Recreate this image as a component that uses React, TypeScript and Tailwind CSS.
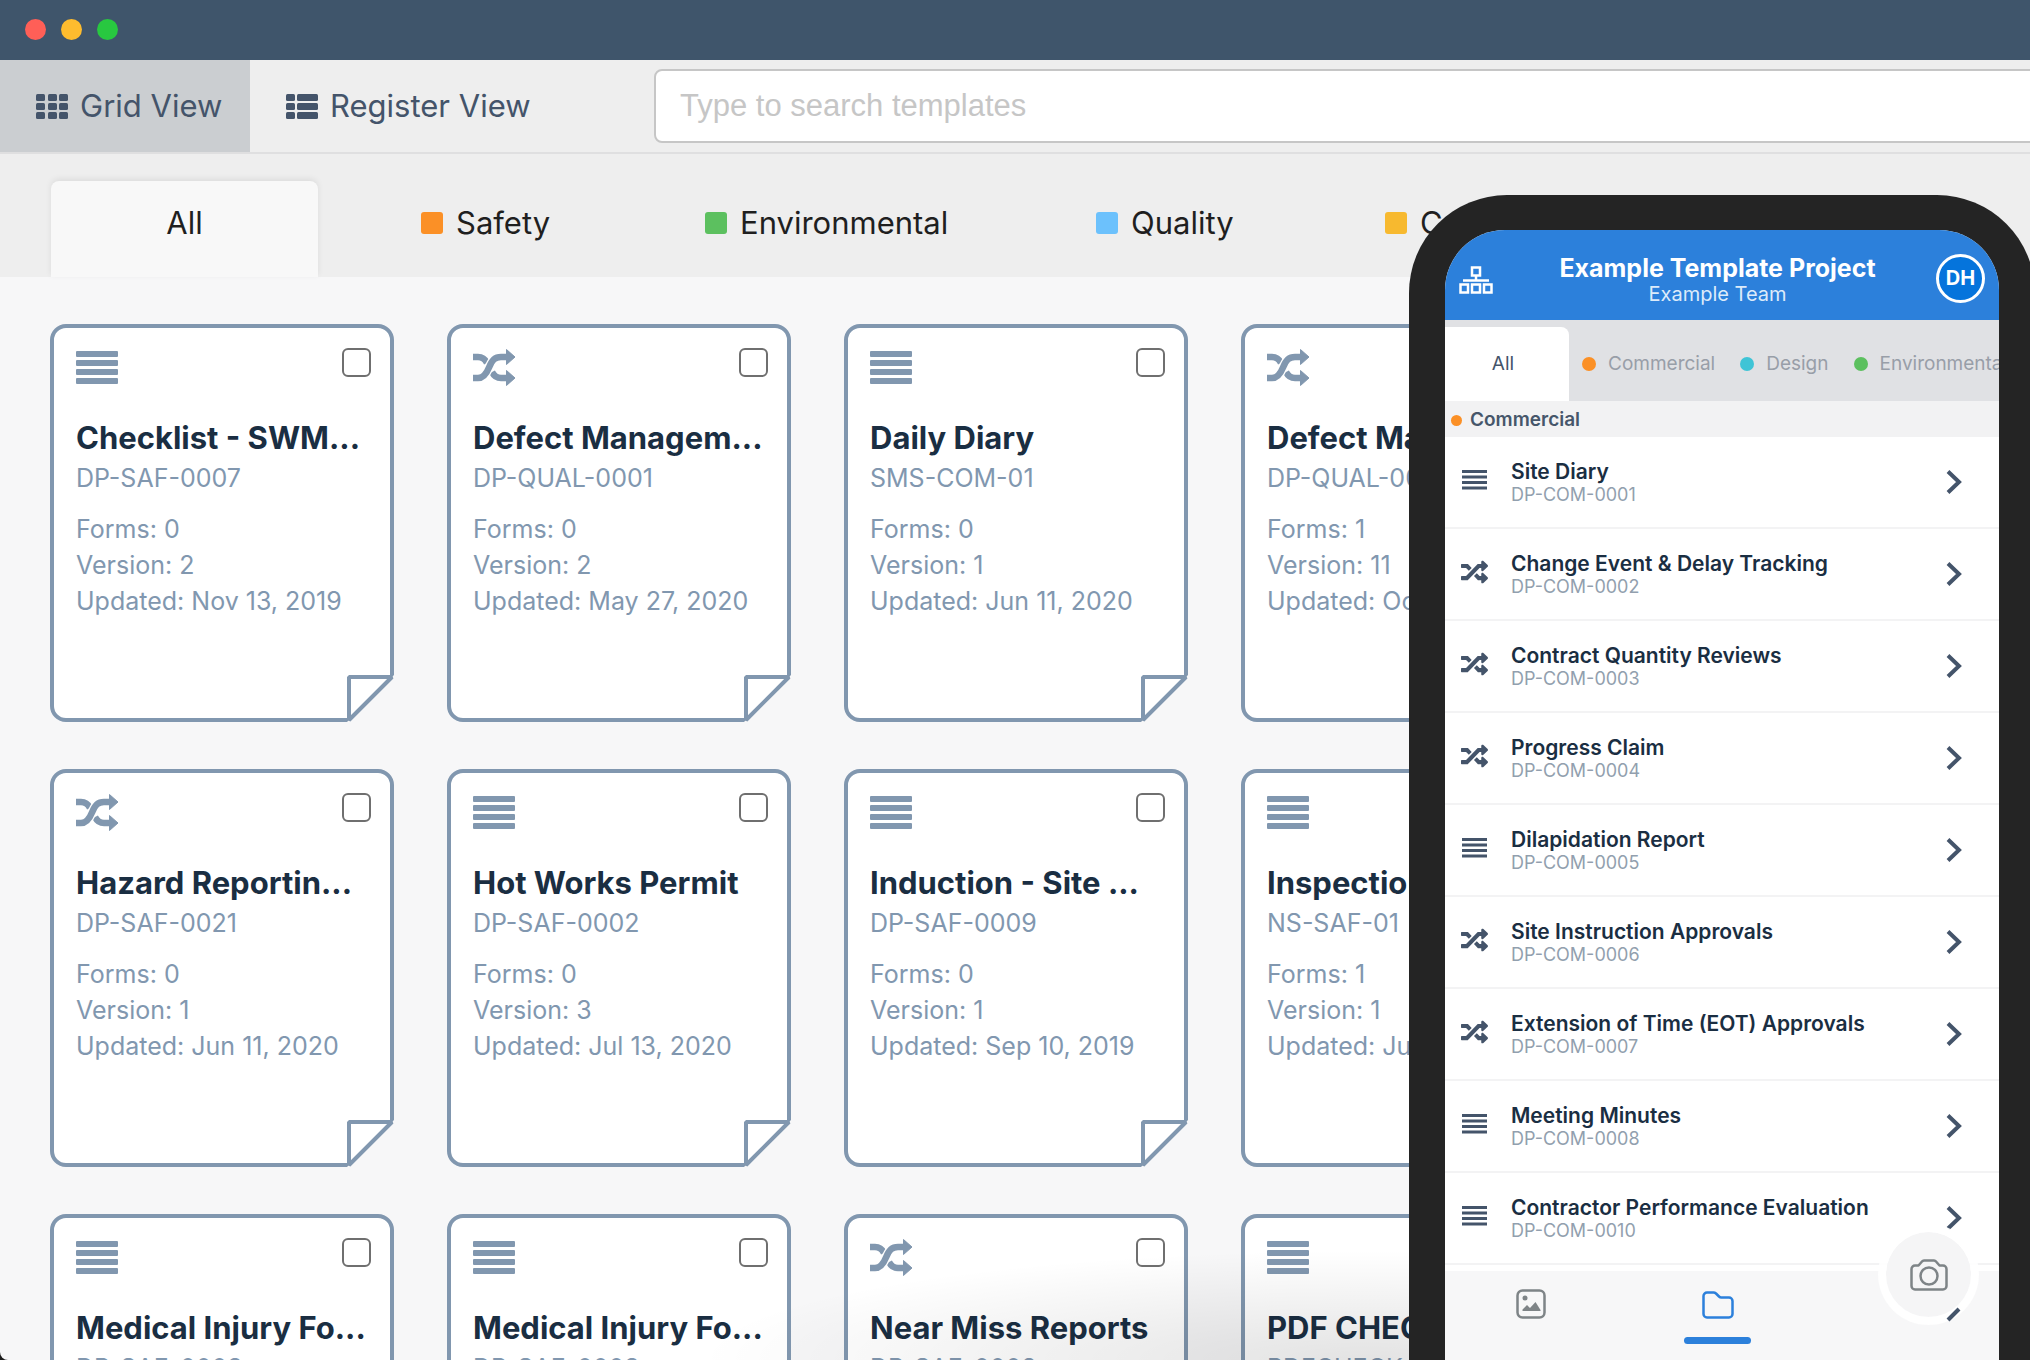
import { useState } from "react";

type IconKind = "list" | "shuffle";

const tabs = [
    { name: "Safety", color: "bg-[#fb9026]", width: "w-[284px]" },
    { name: "Environmental", color: "bg-[#5cc05f]", width: "w-[391px]" },
    { name: "Quality", color: "bg-[#6cc1fc]", width: "w-[289px]" },
    { name: "Commercial", color: "bg-[#f7b92f]", width: "w-[340px]" },
];

const templates = [
    { id: "1", icon: "list", name: "Checklist - SWM...", code: "DP-SAF-0007", forms: 0, version: 2, updated: "Nov 13, 2019" },
    { id: "2", icon: "shuffle", name: "Defect Managem...", code: "DP-QUAL-0001", forms: 0, version: 2, updated: "May 27, 2020" },
    { id: "3", icon: "list", name: "Daily Diary", code: "SMS-COM-01", forms: 0, version: 1, updated: "Jun 11, 2020" },
    { id: "4", icon: "shuffle", name: "Defect Managem...", code: "DP-QUAL-0002", forms: 1, version: 11, updated: "Oct 12, 2020" },
    { id: "5", icon: "shuffle", name: "Hazard Reportin...", code: "DP-SAF-0021", forms: 0, version: 1, updated: "Jun 11, 2020" },
    { id: "6", icon: "list", name: "Hot Works Permit", code: "DP-SAF-0002", forms: 0, version: 3, updated: "Jul 13, 2020" },
    { id: "7", icon: "list", name: "Induction - Site ...", code: "DP-SAF-0009", forms: 0, version: 1, updated: "Sep 10, 2019" },
    { id: "8", icon: "list", name: "Inspection Report", code: "NS-SAF-01", forms: 1, version: 1, updated: "Jun 11, 2020" },
    { id: "9", icon: "list", name: "Medical Injury Fo...", code: "DP-SAF-0003", forms: 0, version: 1, updated: "Jun 11, 2020" },
    { id: "10", icon: "list", name: "Medical Injury Fo...", code: "DP-SAF-0003", forms: 0, version: 1, updated: "Jun 11, 2020" },
    { id: "11", icon: "shuffle", name: "Near Miss Reports", code: "DP-SAF-0008", forms: 0, version: 1, updated: "Jun 11, 2020" },
    { id: "12", icon: "list", name: "PDF CHECKLIST", code: "PDFCHECK-01", forms: 0, version: 1, updated: "Jun 11, 2020" },
];

const mobileTabs = [
    { name: "Commercial", color: "bg-[#fb9026]" },
    { name: "Design", color: "bg-[#3fc4d6]" },
    { name: "Environmental", color: "bg-[#5cc05f]" },
];

const mobileRows = [
    { icon: "list", name: "Site Diary", code: "DP-COM-0001" },
    { icon: "shuffle", name: "Change Event & Delay Tracking", code: "DP-COM-0002" },
    { icon: "shuffle", name: "Contract Quantity Reviews", code: "DP-COM-0003" },
    { icon: "shuffle", name: "Progress Claim", code: "DP-COM-0004" },
    { icon: "list", name: "Dilapidation Report", code: "DP-COM-0005" },
    { icon: "shuffle", name: "Site Instruction Approvals", code: "DP-COM-0006" },
    { icon: "shuffle", name: "Extension of Time (EOT) Approvals", code: "DP-COM-0007" },
    { icon: "list", name: "Meeting Minutes", code: "DP-COM-0008" },
    { icon: "list", name: "Contractor Performance Evaluation", code: "DP-COM-0010" },
];

const CardIcon = ({ kind }: { kind: IconKind }) =>
    kind === "list" ? (
        <svg className="w-[42px] h-10" viewBox="0 0 42 40" fill="currentColor">
            <rect y="3" width="42" height="6" rx="1" />
            <rect y="12" width="42" height="6" rx="1" />
            <rect y="21" width="42" height="6" rx="1" />
            <rect y="30" width="42" height="6" rx="1" />
        </svg>
    ) : (
        <svg className="w-[42px] h-10" viewBox="0 0 42 40" fill="none" stroke="currentColor" strokeWidth="6.500">
            <path d="M0 9h5c4 0 7 2 9 6M19 24c2 4 5 6 9 6h7" />
            <path d="M5 30c5 0 8-3 11-10.500S22 9 28 9" stroke="#fff" strokeWidth="9" />
            <path d="M0 30h5c5 0 8-3 11-10.500S22 9 28 9h7" />
            <path d="M33.500 1.500L42 9l-8.500 7.500zM33.500 22.500L42 30l-8.500 7.500z" fill="currentColor" strokeWidth="1" strokeLinejoin="round" />
        </svg>
    );

const RowIcon = ({ kind }: { kind: IconKind }) =>
    kind === "list" ? (
        <svg className="w-[27px] h-[26px] mb-1" viewBox="0 0 27 26" fill="currentColor">
            <rect x="1" y="3" width="25" height="3" />
            <rect x="1" y="8.500" width="25" height="3" />
            <rect x="1" y="14" width="25" height="3" />
            <rect x="1" y="19.500" width="25" height="3" />
        </svg>
    ) : (
        <svg className="w-[27px] h-[26px] mb-1" viewBox="0 0 512 512" fill="currentColor" preserveAspectRatio="none">
            <path d="M504.971 359.029c9.373 9.373 9.373 24.569 0 33.941l-80 79.984c-15.010 15.010-40.971 4.490-40.971-16.971V416h-58.785a12.004 12.004 0 0 1-8.773-3.812l-70.556-75.596 53.333-57.143L352 336h32v-39.981c0-21.438 25.943-31.998 40.971-16.971l80 79.981zM12 176h84l52.781 56.551 53.333-57.143-70.556-75.596A11.999 11.999 0 0 0 122.785 96H12c-6.627 0-12 5.373-12 12v56c0 6.627 5.373 12 12 12zm372 0v39.984c0 21.460 25.961 31.980 40.971 16.971l80-79.984c9.373-9.373 9.373-24.569 0-33.941l-80-79.981C409.943 24.021 384 34.582 384 56.019V96h-58.785a12.004 12.004 0 0 0-8.773 3.812L96 336H12c-6.627 0-12 5.373-12 12v56c0 6.627 5.373 12 12 12h110.785c3.326 0 6.503-1.381 8.773-3.812L352 176h32z" />
        </svg>
    );

const TemplateCard = ({ item }: { item: any }) => {
    const [checked, setChecked] = useState<boolean>(false);

    return (
        <article className="relative h-[398px] pl-[22px] pr-[19px] pt-5 rounded-2xl border-4 border-[#8197af] bg-white">
            <div className="flex justify-between items-start h-[70px] text-[#8197af]">
                <CardIcon kind={item.icon} />
                <input
                    className="appearance-none size-[29px] rounded-md border-2 border-[#6f6f6f] bg-white checked:bg-[#8197af]"
                    type="checkbox"
                    aria-label={item.name}
                    checked={checked}
                    onChange={() => setChecked(!checked)}
                />
            </div>
            <h2 className="text-[31px] leading-[40px] font-bold text-[#1a2e42] whitespace-nowrap">
                {item.name}
            </h2>
            <div className="text-[25px] leading-[40px] text-[#8197af] whitespace-nowrap">
                {item.code}
            </div>
            <div className="mt-[13px] text-[25px] leading-[36px] text-[#8197af] whitespace-nowrap">
                <div>Forms: {item.forms}</div>
                <div>Version: {item.version}</div>
                <div>Updated: {item.updated}</div>
            </div>
            {/* folded corner */}
            <svg className="absolute -right-1 -bottom-1 size-[47px]" viewBox="0 0 47 47">
                <path d="M0 47L47 0V47z" fill="#f7f7f8" />
                <path d="M2 45V2H45z" fill="#fff" stroke="#8197af" strokeWidth="4" strokeLinejoin="bevel" />
            </svg>
        </article>
    );
};

const Phone = () => (
    <aside className="absolute top-[195px] -right-[5px] bottom-0 w-[626px] px-9 pt-[35px] rounded-t-[98px] bg-[#242424]">
        <div className="relative flex flex-col h-full rounded-t-[60px] bg-white overflow-hidden">
            <header className="flex items-center shrink-0 h-[90px] px-3.5 bg-[#2c80db] text-white">
                <svg className="mt-2.5 w-[34px] h-7" viewBox="0 0 34 28" fill="none" stroke="currentColor" strokeWidth="2.500">
                    <rect x="13" y="1.500" width="8" height="8" />
                    <path d="M17 9.500v5M4 14.500h26" />
                    <rect x="1.500" y="18.500" width="7.500" height="8" />
                    <rect x="13" y="18.500" width="8" height="8" />
                    <rect x="25" y="18.500" width="7.500" height="8" />
                </svg>
                <div className="grow pt-2.5 pl-1.5 text-center">
                    <h1 className="text-[25px] leading-[28px] font-bold">Example Template Project</h1>
                    <p className="text-[20px] leading-[24px] text-[#dcebfa]">Example Team</p>
                </div>
                <button className="size-[49px] mt-1.5 rounded-full border-3 border-white bg-[#0574dc] text-[20px] font-bold">
                    DH
                </button>
            </header>
            <nav className="flex items-end shrink-0 h-[81px] bg-[#e0e1e4] text-[19px] text-[#989ea8]">
                <button className="shrink-0 w-[124px] h-[74px] pr-2 rounded-tr-lg bg-white text-[#44546a]">All</button>
                {mobileTabs.map((tab) => (
                    <button className="flex items-center shrink-0 gap-3 h-[74px] ml-[13px] mr-3" key={tab.name}>
                        <span className={`size-3.5 rounded-full ${tab.color}`}></span>
                        {tab.name}
                    </button>
                ))}
            </nav>
            <div className="flex items-center shrink-0 gap-2 h-9 pt-0.5 pl-1.5 bg-[#f2f2f3] text-[19px] font-semibold text-[#46566a]">
                <span className="size-[11px] rounded-full bg-[#fb9026]"></span>
                Commercial
            </div>
            <ul className="shrink-0">
                {mobileRows.map((row) => (
                    <li className="h-[92px] border-b-2 border-[#f3f3f4]" key={row.code}>
                        <button className="flex items-center w-full h-full pl-4 pr-[37px] text-left text-[#44546a]">
                            <RowIcon kind={row.icon as IconKind} />
                            <span className="grow pt-0.5 pl-[23px]">
                                <span className="block text-[21px] leading-[24px] font-semibold text-[#1a2e42]">{row.name}</span>
                                <span className="block text-[18px] leading-[22px] text-[#929fae]">{row.code}</span>
                            </span>
                            <svg className="w-4 h-6" viewBox="0 0 16 24" fill="none" stroke="currentColor" strokeWidth="4">
                                <path d="M2 1.500l11 10.500L2 22.500" />
                            </svg>
                        </button>
                    </li>
                ))}
            </ul>
            <footer className="flex grow mt-1.5 pl-[71px] gap-[138px] bg-[#f7f7f8]">
                <button className="flex w-[30px] pt-[18px]" aria-label="Photos">
                    <svg className="w-[30px] h-[30px]" viewBox="0 0 30 30" fill="none" stroke="#7e8487" strokeWidth="2.500">
                        <rect x="1.500" y="1.500" width="27" height="27" rx="5" />
                        <circle cx="9" cy="9" r="2.500" fill="#7e8487" stroke="none" />
                        <path d="M6.500 22v-1.500l4.500-4.500 3 3 5.500-6 5 8v1z" fill="#7e8487" stroke="none" />
                    </svg>
                </button>
                <button className="flex flex-col items-center gap-[18px] w-[67px] pt-5" aria-label="Folders">
                    <svg className="w-8 h-7" viewBox="0 0 32 28" fill="none" stroke="#2c80db" strokeWidth="2.500" strokeLinejoin="round">
                        <path d="M5 1.500h6.500c1 0 1.800.4 2.500 1l3 3c.6.600 1.300 1 2.200 1H27a3.500 3.500 0 0 1 3.500 3.500v13a3.500 3.500 0 0 1-3.500 3.500H5A3.500 3.500 0 0 1 1.500 23V5A3.500 3.500 0 0 1 5 1.500z" />
                    </svg>
                    <span className="w-full h-[7px] rounded-full bg-[#2c80db]"></span>
                </button>
            </footer>
            <button
                className="absolute right-5 bottom-[35px] flex items-center justify-center size-[101px] rounded-full border-8 border-white/90 bg-[#f5f5f6] bg-clip-padding"
                aria-label="Camera"
            >
                <svg className="w-[38px] h-8" viewBox="0 0 38 32" fill="none" stroke="#7e8487" strokeWidth="2.500" strokeLinejoin="round">
                    <path d="M5 6.500h3.500L12 2.500c.5-.700 1.200-1 2-1h10c.8 0 1.500.300 2 1l3.500 4H33A3.500 3.500 0 0 1 36.500 10v17a3.500 3.500 0 0 1-3.500 3.500H5A3.500 3.500 0 0 1 1.500 27V10A3.500 3.500 0 0 1 5 6.500z" />
                    <circle cx="19" cy="17" r="8.500" />
                </svg>
            </button>
            {/* tip of the next row's chevron, showing under the camera button */}
            <svg className="absolute right-[37px] bottom-[38px] w-4 h-4" viewBox="0 0 16 16" fill="none" stroke="#44546a" strokeWidth="4">
                <path d="M2 14L13 3" />
            </svg>
        </div>
    </aside>
);

const App = () => {
    const [search, setSearch] = useState<string>("");

    return (
        <div className="relative h-screen overflow-hidden bg-[#1c1c1c] font-['Inter',sans-serif]">
            <div className="flex flex-col h-full overflow-hidden rounded-bl-lg bg-[#f7f7f8]">
                <div className="flex items-center shrink-0 gap-[15px] h-[60px] pl-[25px] pb-0.5 bg-[#3f556b]">
                    <span className="size-[21px] rounded-full bg-[#ff5f57]"></span>
                    <span className="size-[21px] rounded-full bg-[#febc2e]"></span>
                    <span className="size-[21px] rounded-full bg-[#28c840]"></span>
                </div>
                <div className="flex items-center shrink-0 h-[94px] border-b-2 border-[#dfdfe0] bg-[#eeeeee] text-[31px] text-[#44546a]">
                    <button className="flex items-center gap-3 w-[250px] h-full pl-9 bg-[#cbced1] whitespace-nowrap">
                        <svg className="w-8 h-[25px]" viewBox="0 0 32 25" fill="currentColor">
                            {[0, 12, 23].map((x) =>
                                [0, 9, 18].map((y) => <rect x={x} y={y} width="9" height="7" rx="1.500" key={`${x}-${y}`} />)
                            )}
                        </svg>
                        Grid View
                    </button>
                    <button className="flex items-center gap-3 w-[404px] h-full pl-9">
                        <svg className="w-8 h-[25px]" viewBox="0 0 32 25" fill="currentColor">
                            {[0, 9, 18].map((y) => (
                                <g key={y}>
                                    <rect y={y} width="9" height="7" rx="1.500" />
                                    <rect x="11" y={y} width="21" height="7" rx="1.500" />
                                </g>
                            ))}
                        </svg>
                        Register View
                    </button>
                    <input
                        className="grow h-[74px] pl-6 -mr-4 rounded-lg border-2 border-[#c6c6c6] bg-white font-['Liberation_Sans',sans-serif] text-[31px] text-[#44546a] placeholder:text-[#c6c6c6] outline-none"
                        type="text"
                        aria-label="Search templates"
                        placeholder="Type to search templates"
                        value={search}
                        onChange={(e) => setSearch(e.target.value)}
                    />
                </div>
                <nav className="flex items-end shrink-0 h-[123px] pl-[51px] bg-[#eeeeee] text-[31px] text-[#1f1f1f]">
                    <button className="w-[267px] h-[96px] pb-3 rounded-t-lg bg-[#f8f8f8] shadow-[0_-2px_6px_rgba(0,0,0,0.08)]">
                        All
                    </button>
                    <div className="flex pl-[103px]">
                        {tabs.map((tab) => (
                            <button className={`flex items-center gap-[13px] h-[96px] pb-3 ${tab.width}`} key={tab.name}>
                                <span className={`size-[22px] rounded-[3px] ${tab.color}`}></span>
                                {tab.name}
                            </button>
                        ))}
                    </div>
                </nav>
                <main className="grid grid-cols-[repeat(4,344px)] gap-x-[53px] gap-y-[47px] pl-[50px] pt-[47px]">
                    {templates.map((item) => (
                        <TemplateCard item={item} key={item.id} />
                    ))}
                </main>
            </div>
            {/* shade the phone throws on the page */}
            <div className="absolute right-0 bottom-0 w-[1330px] h-[110px] pointer-events-none bg-[radial-gradient(ellipse_50%_100%_at_50%_100%,rgba(0,0,0,0.11),transparent)]"></div>
            <Phone />
        </div>
    );
};

export default App;
